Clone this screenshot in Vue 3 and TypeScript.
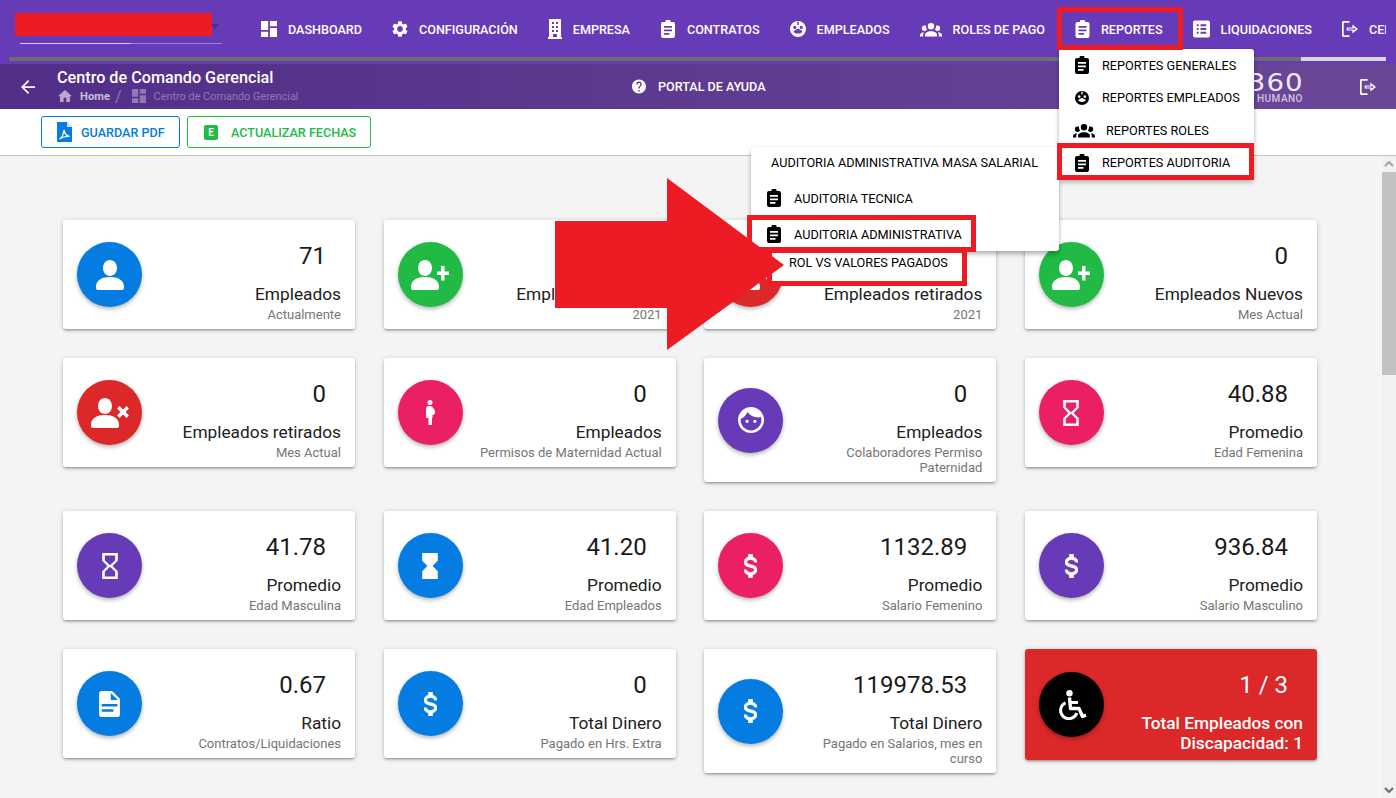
<script setup lang="ts">
type Icon = { vb: string; d: string; w: number; h: number }

const clip = 'M2 2h2.5V1a1 1 0 0 1 1-1h3a1 1 0 0 1 1 1v1H12a2 2 0 0 1 2 2v12a2 2 0 0 1-2 2H2a2 2 0 0 1-2-2V4a2 2 0 0 1 2-2zM3 6v1.8h8V6zM3 9.5v1.8h8V9.5zM3 13v1.8h5.5V13z'
const dollar = 'M7,15H9C9,16.08 10.37,17 12,17C13.63,17 15,16.08 15,15C15,13.9 13.96,13.5 11.76,12.97C9.64,12.44 7,11.78 7,9C7,7.21 8.47,5.69 10.5,5.18V3H13.5V5.18C15.53,5.69 17,7.21 17,9H15C15,7.92 13.63,7 12,7C10.37,7 9,7.92 9,9C9,10.1 10.04,10.5 12.24,11.03C14.36,11.56 17,12.22 17,15C17,16.79 15.53,18.31 13.5,18.82V21H10.5V18.82C8.47,18.31 7,16.79 7,15Z'
const hourglass = 'M6 2v6h.01L6 8.01 10 12l-4 4 .01.01H6V22h12v-5.99h-.01L18 16l-4-4 4-3.99-.01-.01H18V2H6z'
const person = 'M14 0c4 0 7 3.6 7 8s-3 8-7 8-7-3.6-7-8 3-8 7-8zM0 27c0-7 6-10 14-10s14 3 14 10v1a2 2 0 0 1-2 2H2a2 2 0 0 1-2-2z'

const icons: Record<string, Icon> = {
  dashboard: { vb: '3 3 18 18', d: 'M3 13h8V3H3v10zm0 8h8v-6H3v6zm10 0h8V11h-8v10zm0-18v6h8V3h-8z', w: 16, h: 16 },
  cog: { vb: '2 2 20 20', d: 'M19.14 12.94c.04-.3.06-.61.06-.94 0-.32-.02-.64-.07-.94l2.03-1.58c.18-.14.23-.41.12-.61l-1.92-3.32c-.12-.22-.37-.29-.59-.22l-2.39.96c-.5-.38-1.03-.7-1.62-.94l-.36-2.54c-.04-.24-.24-.41-.48-.41h-3.84c-.24 0-.43.17-.47.41l-.36 2.54c-.59.24-1.13.57-1.62.94l-2.39-.96c-.22-.08-.47 0-.59.22L2.74 8.87c-.12.21-.08.47.12.61l2.03 1.58c-.05.3-.09.63-.09.94s.02.64.07.94l-2.03 1.58c-.18.14-.23.41-.12.61l1.92 3.32c.12.22.37.29.59.22l2.39-.96c.5.38 1.03.7 1.62.94l.36 2.54c.05.24.24.41.48.41h3.84c.24 0 .44-.17.47-.41l.36-2.54c.59-.24 1.13-.56 1.62-.94l2.39.96c.22.08.47 0 .59-.22l1.92-3.32c.12-.22.07-.47-.12-.61l-2.01-1.58zM12 15.6c-1.98 0-3.6-1.62-3.6-3.6s1.62-3.6 3.6-3.6 3.6 1.62 3.6 3.6-1.62 3.6-3.6 3.6z', w: 16, h: 16 },
  building: { vb: '0 0 14 20', d: 'M1 0h12v18h1v2H0v-2h1zM4 3v2h2V3zM8 3v2h2V3zM4 7v2h2V7zM8 7v2h2V7zM4 11v2h2v-2zM8 11v2h2v-2zM5 15v3h4v-3z', w: 14, h: 20 },
  clip: { vb: '0 0 14 18', d: clip, w: 14, h: 18 },
  face: { vb: '2 2 20 20', d: 'M12 2a10 10 0 1 0 0 20 10 10 0 0 0 0-20zM11 3h2v4h-2zM8 8a2 2 0 1 1 0 4 2 2 0 0 1 0-4zM16 8a2 2 0 1 1 0 4 2 2 0 0 1 0-4zM6.5 15c2-2.5 3.5-1.5 5.5-3.5 2 2 3.5 1 5.5 3.5-1 3.5-10 3.5-11 0z', w: 16, h: 16 },
  group: { vb: '0 5 24 15', d: 'M12,5.5A3.5,3.5 0 0,1 15.5,9A3.5,3.5 0 0,1 12,12.5A3.5,3.5 0 0,1 8.5,9A3.5,3.5 0 0,1 12,5.5M5,8C5.56,8 6.08,8.15 6.53,8.42C6.38,9.85 6.8,11.27 7.66,12.38C7.16,13.34 6.16,14 5,14A3,3 0 0,1 2,11A3,3 0 0,1 5,8M19,8A3,3 0 0,1 22,11A3,3 0 0,1 19,14C17.84,14 16.84,13.34 16.34,12.38C17.2,11.27 17.62,9.85 17.47,8.42C17.92,8.15 18.44,8 19,8M5.5,18.25C5.5,16.18 8.41,14.5 12,14.5C15.59,14.5 18.5,16.18 18.5,18.25V20H5.5V18.25M0,20V18.5C0,17.11 1.89,15.94 4.45,15.6C3.86,16.28 3.5,17.22 3.5,18.25V20H0M24,20H20.5V18.25C20.5,17.22 20.14,16.28 19.55,15.6C22.11,15.94 24,17.11 24,18.5V20Z', w: 23, h: 15 },
  list: { vb: '3 3 18 18', d: 'M19 3H5c-1.1 0-2 .9-2 2v14c0 1.1.9 2 2 2h14c1.1 0 2-.9 2-2V5c0-1.1-.9-2-2-2zM9 17H7v-2h2v2zm0-4H7v-2h2v2zm0-4H7V7h2v2zm8 8h-6v-2h6v2zm0-4h-6v-2h6v2zm0-4h-6V7h6v2z', w: 18, h: 18 },
  logout: { vb: '0 0 17 17', d: 'M0 1.5A1.5 1.5 0 0 1 1.5 0H8v1.8H1.8v13.4H8V17H1.5A1.5 1.5 0 0 1 0 15.5zM11 3.8l6 4.7-6 4.7v-3H5V6.800h6zM12.500 6.900v1h-6v1.200h6v1l2-1.600z', w: 16, h: 16 },
  help: { vb: '2 2 20 20', d: 'M12 2C6.48 2 2 6.48 2 12s4.48 10 10 10 10-4.48 10-10S17.52 2 12 2zm1 17h-2v-2h2v2zm2.07-7.75l-.9.92C13.45 12.9 13 13.5 13 15h-2v-.5c0-1.1.45-2.1 1.17-2.83l1.24-1.26c.37-.36.59-.86.59-1.41 0-1.1-.9-2-2-2s-2 .9-2 2H8c0-2.21 1.79-4 4-4s4 1.79 4 4c0 .88-.36 1.68-.93 2.25z', w: 14, h: 15 },
  back: { vb: '4 4 16 16', d: 'M20 11H7.83l5.59-5.59L12 4l-8 8 8 8 1.41-1.41L7.83 13H20v-2z', w: 13, h: 13 },
  home: { vb: '2 3 20 17', d: 'M10 20v-6h4v6h5v-8h3L12 3 2 12h3v8z', w: 14, h: 12 },
  person: { vb: '0 0 28 30', d: person, w: 28, h: 30 },
  personPlus: { vb: '0 0 38 30', d: person + 'M30 6h3.500v5.500H38v3.500h-4.500v5.500H30V15h-4v-3.500h4z', w: 38, h: 30 },
  personX: { vb: '0 0 38 30', d: person + 'M28.500 8L32 11.500 35.500 8 38 10.500 34.500 14 38 17.500 35.500 20 32 16.500 28.500 20 26 17.500 29.500 14 26 10.500z', w: 38, h: 30 },
  pregnant: { vb: '0 0 10 25', d: 'M5 0a2.500 2.500 0 1 1 0 5 2.500 2.500 0 0 1 0-5zM3 6h2.500c3 1 4.500 4 4.500 6.500 0 1.500-1 2.500-2.500 2.500v3H7v7H3.500v-7H1V9c0-2 1-3 2-3z', w: 10, h: 25 },
  faceOutline: { vb: '2 2 20 20', d: 'M9 11.750c-.69 0-1.250.56-1.250 1.250s.56 1.250 1.250 1.250 1.250-.56 1.250-1.250-.56-1.250-1.250-1.250zm6 0c-.69 0-1.250.56-1.250 1.250s.56 1.250 1.250 1.250 1.250-.56 1.250-1.250-.56-1.250-1.250-1.250zM12 2C6.480 2 2 6.480 2 12s4.480 10 10 10 10-4.480 10-10S17.520 2 12 2zm0 18c-4.410 0-8-3.590-8-8 0-.29.02-.58.05-.86 2.360-1.050 4.230-2.980 5.210-5.370C11.070 8.330 14.050 10 17.420 10c.78 0 1.530-.09 2.250-.26.21.71.33 1.470.33 2.260 0 4.410-3.590 8-8 8z', w: 26, h: 26 },
  hourOutline: { vb: '6 2 12 20', d: 'M6 2v6h.01L6 8.010 10 12l-4 4 .01.01H6V22h12v-5.990h-.01L18 16l-4-4 4-3.990-.01-.01H18V2H6zm10 14.500V20H8v-3.500l4-4 4 4zm-4-5l-4-4V4h8v3.500l-4 4z', w: 16, h: 26 },
  hourFill: { vb: '6 2 12 20', d: hourglass, w: 16, h: 26 },
  dollar: { vb: '7 3 10 18', d: dollar, w: 13, h: 24 },
  doc: { vb: '4 2 16 20', d: 'M13,9H18.500L13,3.500V9M6,2H14L20,8V20A2,2 0 0,1 18,22H6C4.890,22 4,21.100 4,20V4C4,2.890 4.890,2 6,2M15,18V16H6V18H15M18,14V12H6V14H18Z', w: 21, h: 26 },
}

// w is the icon's slot in the bar, the labels do not sit at an even distance from it
const navItems = [
  { icon: 'dashboard', w: 16, label: 'DASHBOARD' },
  { icon: 'cog', w: 16, label: 'CONFIGURACIÓN' },
  { icon: 'building', w: 14, label: 'EMPRESA' },
  { icon: 'clip', w: 16, label: 'CONTRATOS' },
  { icon: 'face', w: 16, label: 'EMPLEADOS' },
  { icon: 'group', w: 22, label: 'ROLES DE PAGO' },
  { icon: 'clip', w: 15, label: 'REPORTES' },
  { icon: 'list', w: 17, label: 'LIQUIDACIONES' },
  { icon: 'logout', w: 16, label: 'CERRAR SESIÓN' },
]

const reportMenu = [
  { icon: 'clip', label: 'REPORTES GENERALES' },
  { icon: 'face', label: 'REPORTES EMPLEADOS' },
  { icon: 'group', label: 'REPORTES ROLES' },
  { icon: 'clip', label: 'REPORTES AUDITORIA' },
]

const auditMenu = [
  { icon: 'clip', label: 'AUDITORIA TECNICA' },
  { icon: 'clip', label: 'AUDITORIA ADMINISTRATIVA' },
]

const blue = '#047ce2'
const green = '#21ba45'
const red = '#dc2828'
const pink = '#eb1f63'
const purple = '#673ab7'

const cards = [
  { icon: 'person', color: blue, value: '71', label: 'Empleados', sub: 'Actualmente' },
  { icon: 'personPlus', color: green, value: '0', label: 'Empleados nuevos', sub: '2021' },
  { icon: 'personX', color: red, value: '0', label: 'Empleados retirados', sub: '2021' },
  { icon: 'personPlus', color: green, value: '0', label: 'Empleados Nuevos', sub: 'Mes Actual' },
  { icon: 'personX', color: red, value: '0', label: 'Empleados retirados', sub: 'Mes Actual' },
  { icon: 'pregnant', color: pink, value: '0', label: 'Empleados', sub: 'Permisos de Maternidad Actual' },
  { icon: 'faceOutline', color: purple, value: '0', label: 'Empleados', sub: 'Colaboradores Permiso Paternidad' },
  { icon: 'hourOutline', color: pink, value: '40.88', label: 'Promedio', sub: 'Edad Femenina' },
  { icon: 'hourOutline', color: purple, value: '41.78', label: 'Promedio', sub: 'Edad Masculina' },
  { icon: 'hourFill', color: blue, value: '41.20', label: 'Promedio', sub: 'Edad Empleados' },
  { icon: 'dollar', color: pink, value: '1132.89', label: 'Promedio', sub: 'Salario Femenino' },
  { icon: 'dollar', color: purple, value: '936.84', label: 'Promedio', sub: 'Salario Masculino' },
  { icon: 'doc', color: blue, value: '0.67', label: 'Ratio', sub: 'Contratos/Liquidaciones' },
  { icon: 'dollar', color: blue, value: '0', label: 'Total Dinero', sub: 'Pagado en Hrs. Extra' },
  { icon: 'dollar', color: blue, value: '119978.53', label: 'Total Dinero', sub: 'Pagado en Salarios, mes en curso' },
]
</script>

<template>
  <div class="app">
    <header class="topbar">
      <div class="nav-row">
        <div class="brand">
          <div class="brand-name"></div>
          <div class="brand-line"></div>
          <span class="brand-caret"></span>
        </div>
        <nav class="nav">
          <a v-for="item in navItems" :key="item.label" class="nav-item">
            <svg :viewBox="icons[item.icon].vb" :width="item.w" :height="icons[item.icon].h" fill-rule="evenodd" fill="currentColor">
              <path :d="icons[item.icon].d" />
            </svg>
            <span>{{ item.label }}</span>
          </a>
        </nav>
      </div>
      <div class="nav-scroll"><div class="nav-thumb"></div></div>
    </header>

    <div class="subbar">
      <div class="subbar-left">
        <svg class="back" :viewBox="icons.back.vb" width="14" height="14" fill="currentColor"><path :d="icons.back.d" /></svg>
        <div>
          <div class="page-title">Centro de Comando Gerencial</div>
          <div class="crumbs">
            <svg :viewBox="icons.home.vb" width="14" height="12" fill="currentColor"><path :d="icons.home.d" /></svg>
            <b>Home</b>
            <i>/</i>
            <span class="crumb-current">
              <svg :viewBox="icons.dashboard.vb" width="14" height="14" fill="currentColor"><path :d="icons.dashboard.d" /></svg>
              Centro de Comando Gerencial
            </span>
          </div>
        </div>
      </div>
      <div class="help">
        <svg :viewBox="icons.help.vb" width="14" height="15" fill="currentColor"><path :d="icons.help.d" /></svg>
        <span>PORTAL DE AYUDA</span>
      </div>
      <div class="logo">
        <div class="logo-num">360</div>
        <div class="logo-sub">HUMANO</div>
      </div>
      <svg class="sub-logout" :viewBox="icons.logout.vb" width="16" height="16" fill-rule="evenodd" fill="currentColor"><path :d="icons.logout.d" /></svg>
    </div>

    <div class="toolbar">
      <button class="tool-btn tool-blue">
        <svg viewBox="0 0 15 20" width="15" height="20">
          <path d="M0 0h10l5 5v15H0z" fill="#047ce2" />
          <path d="M10 0l5 5h-5z" fill="#cfe6fb" />
          <path d="M2.500 17c2-1 4-5 4.500-9 .8 4 2.500 6 5.500 6.500-3-.3-7 .5-10 2.500z" fill="none" stroke="#fff" stroke-width="1.300" />
        </svg>
        GUARDAR PDF
      </button>
      <button class="tool-btn tool-green">
        <span class="excel">E</span>
        ACTUALIZAR FECHAS
      </button>
    </div>

    <div class="body">
      <main class="content">
        <div class="grid">
          <div v-for="(card, i) in cards" :key="i" class="card">
            <div class="circle" :style="{ background: card.color }">
              <svg
                :viewBox="icons[card.icon].vb"
                :width="icons[card.icon].w"
                :height="icons[card.icon].h"
                fill-rule="evenodd"
                fill="#fff"
                stroke="#fff"
                :stroke-width="card.icon === 'dollar' ? 0.6 : 0"
              >
                <path :d="icons[card.icon].d" />
              </svg>
            </div>
            <div class="card-text">
              <div class="value">{{ card.value }}</div>
              <div class="label">{{ card.label }}</div>
              <div class="sub">{{ card.sub }}</div>
            </div>
          </div>
          <div class="card card-red">
            <div class="circle circle-black">
              <svg viewBox="0 0 31 30" width="31" height="30" fill="none" stroke="#fff">
                <circle cx="13.500" cy="3.200" r="3.200" fill="#fff" stroke="none" />
                <path d="M13.500 7.500l1 11h8.500l3.500 8 3.500-1.300" stroke-width="3.400" stroke-linejoin="round" />
                <path d="M14 12.500h8" stroke-width="3" />
                <path d="M9.500 12.800A8.300 8.300 0 1 0 20.800 23" stroke-width="3" />
              </svg>
            </div>
            <div class="card-text">
              <div class="value">1 / 3</div>
              <div class="label">Total Empleados con Discapacidad: 1</div>
            </div>
          </div>
        </div>
      </main>
      <div class="scrollbar">
        <svg viewBox="0 0 10 6" width="10" height="6"><path d="M1 5l4-4 4 4" fill="none" stroke="#a3a3a3" stroke-width="2" /></svg>
        <div class="scroll-thumb"></div>
        <svg class="scroll-down" viewBox="0 0 10 6" width="10" height="6"><path d="M1 1l4 4 4-4" fill="none" stroke="#6b6b6b" stroke-width="2" /></svg>
      </div>
    </div>

    <div class="menu menu-report">
      <div v-for="item in reportMenu" :key="item.label" class="menu-item" :class="{ 'menu-wide': item.icon === 'group' }">
        <svg :viewBox="icons[item.icon].vb" :height="icons[item.icon].h" fill-rule="evenodd" fill="#000">
          <path :d="icons[item.icon].d" />
        </svg>
        <span>{{ item.label }}</span>
      </div>
    </div>

    <div class="menu menu-audit">
      <div class="menu-head">AUDITORIA ADMINISTRATIVA MASA SALARIAL</div>
      <div v-for="item in auditMenu" :key="item.label" class="audit-item">
        <svg :viewBox="icons.clip.vb" width="14" height="18" fill-rule="evenodd" fill="#000"><path :d="icons.clip.d" /></svg>
        <span>{{ item.label }}</span>
      </div>
    </div>

    <div class="mark mark-reportes"></div>
    <div class="mark mark-auditoria"></div>
    <div class="mark mark-admin"></div>
    <div class="mark mark-rol">ROL VS VALORES PAGADOS</div>
    <svg class="arrow" viewBox="0 0 230 172" width="230" height="172">
      <polygon points="0,43 112,43 112,0 229,87 112,172 112,130 0,130" fill="#ed1c24" />
    </svg>
  </div>
</template>

<style scoped>
.app {
  position: relative;
  width: 1396px;
  height: 798px;
  overflow: hidden;
  display: flex;
  flex-direction: column;
  font-family: Roboto, "Liberation Sans", sans-serif;
  color: #212121;
  background: #f4f4f4;
}

.topbar {
  height: 64px;
  flex: none;
  background: #673ab7;
  color: #fff;
}

.nav-row {
  display: flex;
  height: 57px;
  width: 1386px;
  padding-left: 15px;
  box-sizing: border-box;
  overflow: hidden;
}

.brand {
  position: relative;
  flex: 0 0 246px;
  padding-top: 13px;
  box-sizing: border-box;
}

.brand-name {
  width: 197px;
  height: 23px;
  background: #ed1c24;
}

.brand-line {
  width: 202px;
  height: 1px;
  margin: 7px 0 0 5px;
  background: linear-gradient(90deg, #d8ccee 0 55%, #9d84d2 55%);
}

.brand-caret {
  position: absolute;
  left: 196px;
  top: 24px;
  border-left: 4px solid transparent;
  border-right: 4px solid transparent;
  border-top: 5px solid #4f2d8d;
}

.nav {
  display: flex;
  align-items: center;
  gap: 30px;
  padding-top: 1px;
}

.nav-item {
  display: flex;
  align-items: center;
  gap: 11px;
  font-size: 12.6px;
  font-weight: 500;
  white-space: nowrap;
}

.nav-scroll {
  width: 1377px;
  height: 4px;
  margin-left: 9px;
  background: #d9d9d9;
}

.nav-thumb {
  width: 1292px;
  height: 100%;
  background: #6e6e6e;
}

.subbar {
  height: 45px;
  flex: none;
  display: flex;
  align-items: center;
  color: #fff;
  background: linear-gradient(90deg, #512e88, #6b4798);
}

.subbar-left {
  flex: 0 0 632px;
  display: flex;
  align-items: center;
  padding-left: 21px;
  box-sizing: border-box;
  gap: 22px;
}

.back {
  flex: none;
}

.page-title {
  font-size: 16.2px;
  font-weight: 500;
  line-height: 20px;
  margin-top: -1px;
}

.crumbs {
  display: flex;
  align-items: center;
  gap: 8px;
  height: 17px;
  padding-left: 1px;
  font-size: 10.9px;
  color: #b8a9d2;
}

.crumbs b {
  font-size: 11.2px;
  font-weight: 700;
  color: #c9bfdd;
}

.crumbs i {
  font-style: normal;
  font-size: 16px;
  margin: 0 2px 0 -3px;
  color: #8f79b7;
}

.crumb-current {
  display: flex;
  align-items: center;
  gap: 8px;
  color: #8f78b4;
}

.help {
  display: flex;
  align-items: center;
  gap: 12px;
  font-size: 12.6px;
  font-weight: 500;
}

.logo {
  margin-left: auto;
  margin-right: 57px;
  padding-top: 3px;
  text-align: right;
  line-height: 1;
}

.logo-num {
  font-family: "DejaVu Sans", sans-serif;
  font-size: 24px;
  line-height: 21px;
  letter-spacing: 1px;
  margin-right: -1px;
  transform: scaleX(1.15);
  transform-origin: right center;
  color: #efeaf6;
}

.logo-sub {
  font-size: 10px;
  font-weight: 500;
  letter-spacing: 0.5px;
  color: #cfc3e0;
}

.sub-logout {
  margin-right: 20px;
}

.toolbar {
  height: 47px;
  flex: none;
  display: flex;
  align-items: center;
  gap: 7px;
  padding-left: 41px;
  box-sizing: border-box;
  background: #fff;
  border-bottom: 1px solid #c4c4c4;
}

.tool-btn {
  display: flex;
  align-items: center;
  height: 32px;
  padding: 0 0 0 15px;
  border-radius: 3px;
  background: #fff;
  font-family: inherit;
  font-size: 12.6px;
  font-weight: 500;
  white-space: nowrap;
  cursor: pointer;
}

.tool-blue {
  width: 139px;
  gap: 9px;
  color: #047ce2;
  border: 1px solid #047ce2;
}

.tool-green {
  width: 184px;
  gap: 13px;
  padding-left: 16px;
  color: #21ba45;
  border: 1px solid #21ba45;
}

.excel {
  width: 14px;
  height: 15px;
  border-radius: 2px;
  background: #21ba45;
  color: #fff;
  font-size: 10px;
  font-weight: 700;
  line-height: 15px;
  text-align: center;
}

.body {
  flex: 1;
  display: flex;
  min-height: 0;
}

.content {
  flex: 1;
  padding: 64px 65px 0 63px;
  min-width: 0;
}

.grid {
  display: grid;
  grid-template-columns: repeat(4, 1fr);
  gap: 29px 28.67px;
  align-items: start;
}

.card {
  display: flex;
  align-items: center;
  justify-content: space-between;
  padding: 0 14px;
  background: #fff;
  border-radius: 3px;
  box-shadow: 0 1px 5px rgba(0, 0, 0, 0.2), 0 2px 2px rgba(0, 0, 0, 0.14), 0 3px 1px -2px rgba(0, 0, 0, 0.12);
}

.circle {
  flex: none;
  width: 65px;
  height: 65px;
  border-radius: 50%;
  display: flex;
  align-items: center;
  justify-content: center;
  box-shadow: 0 2px 4px rgba(0, 0, 0, 0.3);
}

.circle-black {
  background: #000;
}

.card-text {
  flex: 1;
  min-width: 0;
  padding: 21px 0 7px 14px;
  text-align: right;
}

.value {
  font-size: 24px;
  line-height: 30px;
  padding-right: 15px;
  color: #1a1a1a;
}

.label {
  margin-top: 10px;
  font-size: 17.3px;
  line-height: 26px;
}

.sub {
  font-size: 13px;
  line-height: 15px;
  color: #757575;
}

.card-red {
  background: #dc2828;
  color: #fff;
}

.card-red .value {
  color: #fff;
}

.card-red .label {
  margin-top: 13px;
  line-height: 20px;
  font-weight: 500;
}

.scrollbar {
  flex: none;
  width: 14px;
  display: flex;
  flex-direction: column;
  align-items: center;
  background: #f1f1f1;
  padding: 5px 0;
  box-sizing: border-box;
}

.scroll-thumb {
  width: 100%;
  height: 203px;
  margin-top: 5px;
  background: #c1c1c1;
}

.scroll-down {
  margin-top: auto;
}

.menu {
  position: absolute;
  background: #fff;
  border-radius: 3px;
  font-size: 12.7px;
  font-weight: 400;
  color: #000;
  box-shadow: 0 2px 4px rgba(0, 0, 0, 0.2), 0 4px 5px rgba(0, 0, 0, 0.14);
}

.menu-report {
  left: 1059px;
  top: 49px;
  width: 195px;
}

.menu-item {
  display: flex;
  align-items: center;
  gap: 13px;
  height: 32.5px;
  padding-left: 16px;
}

.menu-item svg {
  width: 14px;
}

.menu-wide {
  padding-left: 14px;
  gap: 11px;
}

.menu-item.menu-wide svg {
  width: 22px;
}

.menu-audit {
  left: 751px;
  top: 147px;
  width: 308px;
  height: 104px;
}

.menu-head {
  height: 33px;
  padding-left: 20px;
  line-height: 31px;
}

.audit-item {
  display: flex;
  align-items: center;
  gap: 13px;
  height: 36px;
  padding-left: 16px;
}

.mark {
  position: absolute;
  box-sizing: border-box;
  border: 5px solid #ed1c24;
}

.mark-reportes {
  left: 1057px;
  top: 7px;
  width: 126px;
  height: 43px;
}

.mark-auditoria {
  left: 1057px;
  top: 143px;
  width: 197px;
  height: 37px;
}

.mark-admin {
  left: 747px;
  top: 215px;
  width: 229px;
  height: 37px;
}

.mark-rol {
  left: 767px;
  top: 248px;
  width: 200px;
  height: 38px;
  padding-left: 17px;
  background: #fff;
  font-size: 12.7px;
  line-height: 19px;
  color: #000;
}

.arrow {
  position: absolute;
  left: 555px;
  top: 178px;
}
</style>

<style>
html,
body {
  margin: 0;
  overflow: hidden;
}
</style>
